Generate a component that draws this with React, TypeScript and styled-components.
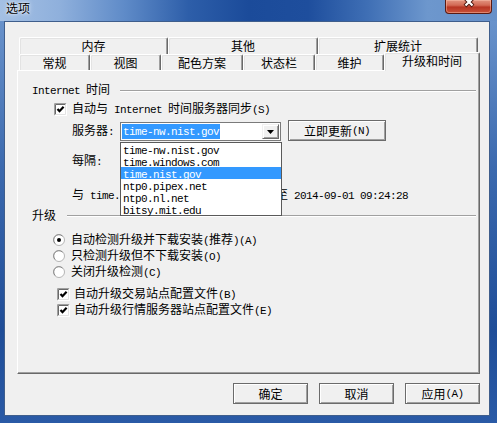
import React from "react";
import styled, { createGlobalStyle } from "styled-components";

const Global = createGlobalStyle`
  html, body { margin: 0; padding: 0; background: #ffffff; }
  body {
    font-family: "Noto Sans CJK SC", "Noto Sans CJK JP", sans-serif;
    font-size: 12px;
    color: #000;
  }
`;

const Window = styled.div`
  width: 497px;
  height: 423px;
  display: flex;
  flex-direction: column;
  overflow: hidden;
  background: linear-gradient(to bottom, #6f98cf 0%, #3b69ae 40%, #1f4d98 78%, #2a5aa6 100%);
`;

const TitleBar = styled.div`
  flex: none;
  height: 21px;
  display: flex;
  align-items: flex-start;
  justify-content: space-between;
  padding: 0 5px 0 6px;
  background: linear-gradient(
    to right,
    #a4c0e4 0%,
    #8fb0dc 12%,
    #5f8bc8 25%,
    #2d5ea9 38%,
    #1b4b9a 50%,
    #1e4e9d 62%,
    #3f6fb5 74%,
    #6d97cd 86%,
    #6690c9 100%
  );
`;

const TitleText = styled.span`
  font-size: 12px;
  line-height: 14px;
  margin-top: 1px;
  color: #000;
  text-shadow: 0 0 5px rgba(255, 255, 255, 0.9), 0 0 2px rgba(255, 255, 255, 0.9);
`;

const CloseBtn = styled.div`
  width: 47px;
  height: 14px;
  box-sizing: border-box;
  border: 1px solid #5a1a12;
  border-top: none;
  border-radius: 0 0 4px 4px;
  background: linear-gradient(to bottom, #e2937f 0%, #d36a55 40%, #b83523 55%, #c9533a 100%);
  box-shadow: inset 0 0 0 1px rgba(255, 200, 180, 0.45);
  display: flex;
  justify-content: center;
  align-items: flex-start;
  overflow: hidden;
`;

const CloseGlyph = styled.svg`
  margin-top: -3px;
`;

const Frame = styled.div`
  flex: 1;
  display: flex;
  padding: 0 7px 7px 4px;
  min-height: 0;
`;

const Client = styled.div`
  flex: 1;
  display: flex;
  flex-direction: column;
  border: 1px solid #3f5e8c;
  background: #f0f0f0;
  padding: 15px 9px 0 12px;
`;

const TabControl = styled.div`
  width: 463px;
  display: flex;
  flex-direction: column;
`;

const TabRow = styled.div<{ $h: number }>`
  height: ${(p) => p.$h}px;
  display: flex;
  align-items: flex-end;
  padding-left: 2px;
`;

const Tab = styled.div<{ $w: number; $active?: boolean }>`
  flex: none;
  width: ${(p) => p.$w}px;
  height: ${(p) => (p.$active ? 19 : 0)}px;
  ${(p) => (p.$active ? "" : "align-self: stretch; height: auto;")}
  box-sizing: border-box;
  background: #f0f0f0;
  border-top: 1px solid #ffffff;
  border-left: 1px solid #ffffff;
  border-right: 1px solid #696969;
  border-radius: 2px 2px 0 0;
  box-shadow: inset -1px 0 #a0a0a0, inset 1px 1px #e3e3e3;
  display: flex;
  align-items: center;
  justify-content: center;
  line-height: 14px;
  position: relative;
  z-index: ${(p) => (p.$active ? 2 : 0)};
  margin-bottom: ${(p) => (p.$active ? -1 : 0)}px;
  padding-bottom: ${(p) => (p.$active ? 3 : 0)}px;
`;

const Panel = styled.div`
  position: relative;
  height: 304px;
  box-sizing: border-box;
  border-top: 1px solid #ffffff;
  border-left: 1px solid #ffffff;
  border-right: 1px solid #696969;
  border-bottom: 1px solid #696969;
  box-shadow: inset -1px -1px #a0a0a0;
  padding: 12px 3px 0 0;
  display: flex;
  flex-direction: column;
`;

const Row = styled.div<{ $mt: number; $indent: number; $h?: number }>`
  display: flex;
  align-items: center;
  height: ${(p) => p.$h ?? 14}px;
  margin-top: ${(p) => p.$mt}px;
  padding-left: ${(p) => p.$indent}px;
  line-height: 14px;
  white-space: pre;
`;

const Rule = styled.div<{ $gap: number }>`
  flex: 1;
  margin-left: ${(p) => p.$gap}px;
  height: 0;
  border-top: 1px solid #a0a0a0;
  border-bottom: 1px solid #ffffff;
  margin-top: 1px;
`;

const Label = styled.span<{ $w?: number }>`
  ${(p) => (p.$w ? `width: ${p.$w}px; flex: none;` : "")}
  white-space: pre;
`;

const Lat = styled.span`
  font-family: "Liberation Mono", "DejaVu Sans Mono", monospace;
  font-size: 11px;
  letter-spacing: -0.6px;
`;

const IconBox = styled.span<{ $gap: number }>`
  display: inline-flex;
  flex: none;
  margin-right: ${(p) => p.$gap}px;
`;

const Combo = styled.div`
  align-self: flex-start;
  margin-top: 2px;
  width: 161px;
  height: 19px;
  box-sizing: border-box;
  border: 1px solid #7a7a7a;
  background: #ffffff;
  padding: 1px;
  display: flex;
  align-items: stretch;
`;

const ComboValue = styled.span`
  background: #3399ff;
  color: #ffffff;
  display: flex;
  align-items: center;
  padding: 0 1px;
  white-space: pre;
`;

const ComboArrow = styled.div`
  margin-left: auto;
  width: 17px;
  box-sizing: border-box;
  background: #f0f0f0;
  border-top: 1px solid #f0f0f0;
  border-left: 1px solid #f0f0f0;
  border-right: 1px solid #696969;
  border-bottom: 1px solid #696969;
  box-shadow: inset 1px 1px #ffffff, inset -1px -1px #a0a0a0;
  display: flex;
  align-items: center;
  justify-content: center;
`;

const DropList = styled.div`
  position: absolute;
  left: 102px;
  top: 71px;
  width: 162px;
  box-sizing: border-box;
  border: 1px solid #5a5a5a;
  background: #ffffff;
  z-index: 3;
`;

const DropItem = styled.div<{ $sel?: boolean }>`
  height: 12px;
  line-height: 12px;
  padding-left: 2px;
  white-space: pre;
  background: ${(p) => (p.$sel ? "#3399ff" : "transparent")};
  color: ${(p) => (p.$sel ? "#ffffff" : "#000000")};
`;

const Button = styled.div<{ $w: number; $ml?: number }>`
  flex: none;
  width: ${(p) => p.$w}px;
  height: 21px;
  margin-left: ${(p) => p.$ml ?? 0}px;
  box-sizing: border-box;
  border: 1px solid #6b6b6b;
  background: #f0f0f0;
  box-shadow: inset 1px 1px #ffffff, inset -1px -1px #a0a0a0;
  display: flex;
  align-items: center;
  justify-content: center;
  line-height: 14px;
  white-space: pre;
`;

const ButtonRow = styled.div`
  display: flex;
  justify-content: flex-end;
  gap: 11px;
  margin-top: 9px;
`;

const T = ({ s }: { s: string }) => (
  <>
    {s
      .split(/([\u0000-\u00ff]+)/)
      .filter(Boolean)
      .map((part, i) =>
        /^[\u0000-\u00ff]+$/.test(part) ? (
          <Lat key={i}>{part}</Lat>
        ) : (
          <React.Fragment key={i}>{part}</React.Fragment>
        )
      )}
  </>
);

const CheckIcon = () => (
  <svg width="13" height="13" viewBox="0 0 13 13">
    <rect x="0" y="0" width="13" height="13" fill="#ffffff" />
    <path d="M0.5 12.5 V0.5 H12.5" stroke="#a0a0a0" fill="none" />
    <path d="M1.5 11.5 V1.5 H11.5" stroke="#696969" fill="none" />
    <path d="M0.5 12.5 H12.5 V0.5" stroke="#ffffff" fill="none" />
    <path d="M1.5 11.5 H11.5 V1.5" stroke="#e3e3e3" fill="none" />
    <path d="M3.5 6 L5.5 8.2 L9.6 3.8" stroke="#000000" strokeWidth="2.2" fill="none" />
  </svg>
);

const RadioIcon = ({ on }: { on?: boolean }) => (
  <svg width="12" height="12" viewBox="0 0 12 12">
    <circle cx="6" cy="6" r="5.5" fill="#ffffff" stroke="#b4b4b4" />
    <path d="M2.2 9.5 A5 5 0 0 1 9.5 2.2" stroke="#8a8a8a" fill="none" />
    {on && <circle cx="6" cy="6" r="2" fill="#000000" />}
  </svg>
);

const servers = [
  "time-nw.nist.gov",
  "time.windows.com",
  "time.nist.gov",
  "ntp0.pipex.net",
  "ntp0.nl.net",
  "bitsy.mit.edu",
];

export default function App() {
  return (
    <>
      <Global />
      <Window>
        <TitleBar>
          <TitleText>选项</TitleText>
          <CloseBtn>
            <CloseGlyph width="12" height="11" viewBox="0 0 12 11">
              <path d="M2 1 L10 9 M10 1 L2 9" stroke="#4a140c" strokeWidth="4" />
              <path d="M2.5 1.5 L9.5 8.5 M9.5 1.5 L2.5 8.5" stroke="#ffffff" strokeWidth="2.2" />
            </CloseGlyph>
          </CloseBtn>
        </TitleBar>
        <Frame>
          <Client>
            <TabControl>
              <TabRow $h={17}>
                <Tab $w={149}>内存</Tab>
                <Tab $w={150}>其他</Tab>
                <Tab $w={160}>扩展统计</Tab>
              </TabRow>
              <TabRow $h={16}>
                <Tab $w={71}>常规</Tab>
                <Tab $w={71}>视图</Tab>
                <Tab $w={82}>配色方案</Tab>
                <Tab $w={72}>状态栏</Tab>
                <Tab $w={69}>维护</Tab>
                <Tab $w={96} $active>
                  升级和时间
                </Tab>
              </TabRow>
              <Panel>
                <Row $mt={0} $indent={14}>
                  <Label>
                    <T s="Internet 时间" />
                  </Label>
                  <Rule $gap={10} />
                </Row>
                <Row $mt={5} $indent={36}>
                  <IconBox $gap={5}>
                    <CheckIcon />
                  </IconBox>
                  <Label>
                    <T s="自动与 Internet 时间服务器同步(S)" />
                  </Label>
                </Row>
                <Row $mt={4} $indent={54} $h={21}>
                  <Label $w={48}>
                    <T s="服务器:" />
                  </Label>
                  <Combo>
                    <ComboValue>
                      <Lat>time-nw.nist.gov</Lat>
                    </ComboValue>
                    <ComboArrow>
                      <svg width="7" height="4" viewBox="0 0 7 4">
                        <path d="M0 0 H7 L3.5 4 Z" fill="#000000" />
                      </svg>
                    </ComboArrow>
                  </Combo>
                  <Button $w={98} $ml={7}>
                    <T s="立即更新(N)" />
                  </Button>
                </Row>
                <Row $mt={13} $indent={54}>
                  <Label>
                    <T s="每隔:" />
                  </Label>
                </Row>
                <Row $mt={20} $indent={54}>
                  <Label>
                    <T s="与 time.nist.gov  上次同步成功时间至 2014-09-01 09:24:28" />
                  </Label>
                </Row>
                <Row $mt={6} $indent={14}>
                  <Label>升级</Label>
                  <Rule $gap={11} />
                </Row>
                <Row $mt={11} $indent={35}>
                  <IconBox $gap={6}>
                    <RadioIcon on />
                  </IconBox>
                  <Label>
                    <T s="自动检测升级并下载安装(推荐)(A)" />
                  </Label>
                </Row>
                <Row $mt={2} $indent={35}>
                  <IconBox $gap={6}>
                    <RadioIcon />
                  </IconBox>
                  <Label>
                    <T s="只检测升级但不下载安装(O)" />
                  </Label>
                </Row>
                <Row $mt={2} $indent={35}>
                  <IconBox $gap={6}>
                    <RadioIcon />
                  </IconBox>
                  <Label>
                    <T s="关闭升级检测(C)" />
                  </Label>
                </Row>
                <Row $mt={8} $indent={39}>
                  <IconBox $gap={4}>
                    <CheckIcon />
                  </IconBox>
                  <Label>
                    <T s="自动升级交易站点配置文件(B)" />
                  </Label>
                </Row>
                <Row $mt={2} $indent={39}>
                  <IconBox $gap={4}>
                    <CheckIcon />
                  </IconBox>
                  <Label>
                    <T s="自动升级行情服务器站点配置文件(E)" />
                  </Label>
                </Row>
                <DropList>
                  {servers.map((s) => (
                    <DropItem key={s} $sel={s === "time.nist.gov"}>
                      <Lat>{s}</Lat>
                    </DropItem>
                  ))}
                </DropList>
              </Panel>
            </TabControl>
            <ButtonRow>
              <Button $w={75}>确定</Button>
              <Button $w={75}>取消</Button>
              <Button $w={75}>
                <T s="应用(A)" />
              </Button>
            </ButtonRow>
          </Client>
        </Frame>
      </Window>
    </>
  );
}
